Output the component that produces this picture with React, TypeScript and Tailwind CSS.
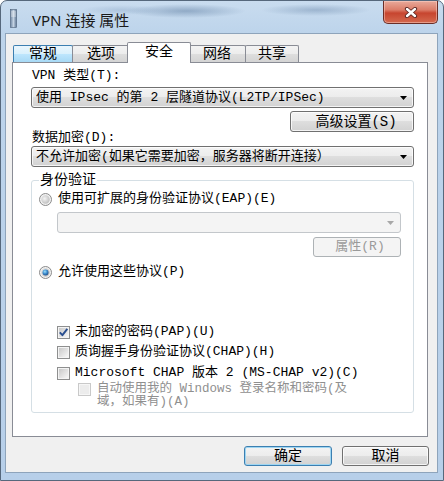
import React from "react";

function Arrow({ disabled }: { disabled?: boolean }) {
  return (
    <svg width="7" height="4" viewBox="0 0 7 4" className="shrink-0">
      <path d="M0 0H7L3.5 4Z" fill={disabled ? "#a8a8a8" : "#000"} />
    </svg>
  );
}

function Combo({ text, disabled, className }: { text?: string; disabled?: boolean; className?: string }) {
  return (
    <div
      className={`flex h-[21px] items-center rounded-[3px] border pl-[4px] pr-[6px] ${
        disabled
          ? "border-[#c3c7cb] bg-[#f4f4f4]"
          : "border-[#707070] bg-[linear-gradient(#f3f3f3,#ececec_50%,#dedede_50%,#d2d2d2)] shadow-[inset_0_0_0_1px_rgba(255,255,255,0.75)]"
      } ${className ?? ""}`}
    >
      <span className="flex-1 truncate whitespace-pre text-[13px] leading-[15px]">{text}</span>
      <Arrow disabled={disabled} />
    </div>
  );
}

function Radio({ checked }: { checked?: boolean }) {
  return (
    <svg width="13" height="13" viewBox="0 0 13 13" className="shrink-0">
      <defs>
        <radialGradient id="rg-off" cx="40%" cy="40%" r="70%">
          <stop offset="0" stopColor="#f4f4f4" />
          <stop offset="1" stopColor="#b9b9b9" />
        </radialGradient>
        <radialGradient id="rg-on" cx="40%" cy="35%" r="70%">
          <stop offset="0" stopColor="#9fe0fb" />
          <stop offset="0.5" stopColor="#3f8fd0" />
          <stop offset="1" stopColor="#1c4a85" />
        </radialGradient>
      </defs>
      <circle cx="6.5" cy="6.5" r="6" fill="#f2f2f2" stroke="#8a8a8a" />
      <circle cx="6.5" cy="6.5" r="4.2" fill="url(#rg-off)" />
      {checked && <circle cx="6.5" cy="6.5" r="3" fill="url(#rg-on)" />}
    </svg>
  );
}

function Check({ checked, disabled }: { checked?: boolean; disabled?: boolean }) {
  return (
    <svg width="13" height="13" viewBox="0 0 13 13" className="shrink-0">
      <defs>
        <linearGradient id="cb-in" x1="0" y1="0" x2="1" y2="1">
          <stop offset="0" stopColor="#c9c9c9" />
          <stop offset="1" stopColor="#f7f7f7" />
        </linearGradient>
      </defs>
      <rect x="0.5" y="0.5" width="12" height="12" fill={disabled ? "#f6f6f6" : "#f4f4f4"} stroke={disabled ? "#c9c9c9" : "#8e8f8f"} />
      {!disabled && <rect x="2" y="2" width="9" height="9" fill="url(#cb-in)" />}
      {disabled && <rect x="2" y="2" width="9" height="9" fill="#ececec" />}
      {checked && (
        <path d="M2.8 6.4L5.4 9.2L10.3 2.8" fill="none" stroke="#2a4f90" strokeWidth="1.9" strokeLinejoin="round" />
      )}
    </svg>
  );
}

export default function App() {
  return (
    <div className="h-[481px] w-[444px] font-[family-name:'Liberation_Mono','Noto_Sans_CJK_SC',monospace] text-black">
      <div className="flex h-[481px] w-[444px] flex-col rounded-t-[7px] border border-[#56687c] bg-[linear-gradient(to_bottom,#c9dcef,#bdd4eb_32px,#b7cfe9)]">
        {/* title bar */}
        <div className="flex h-[32px] items-start bg-[radial-gradient(60px_7px_at_185px_10px,rgba(80,112,150,0.45),transparent),radial-gradient(55px_6px_at_315px_9px,rgba(80,112,150,0.35),transparent),radial-gradient(40px_5px_at_120px_9px,rgba(120,150,185,0.3),transparent)]">
          <svg width="7" height="19" viewBox="0 0 7 19" className="ml-[9px] mt-[8px] shrink-0">
            <defs>
              <linearGradient id="ti" x1="0" y1="0" x2="1" y2="0">
                <stop offset="0" stopColor="#6f87a3" />
                <stop offset="0.5" stopColor="#c3d2e2" />
                <stop offset="1" stopColor="#5d7592" />
              </linearGradient>
            </defs>
            <rect x="0.5" y="0.5" width="6" height="18" fill="url(#ti)" stroke="#4c6078" strokeWidth="0.6" />
            <path d="M1 3H6M1 5H6M1 7H6" stroke="#ffffff" strokeOpacity="0.8" strokeWidth="0.8" />
          </svg>
          <div className="ml-[15px] mt-[9px] font-[family-name:'Noto_Sans','Noto_Sans_CJK_SC',sans-serif] text-[15px] leading-[20px] text-[#1a1a1a]">
            VPN 连接 属性
          </div>
          <div className="ml-auto mr-[5px] flex h-[23px] w-[55px] items-center justify-center rounded-b-[5px] border border-t-0 border-[#6a2e27] bg-[linear-gradient(#e9aa9b,#dc7d69_40%,#c7452f_55%,#d46a4f)] shadow-[inset_0_0_0_1px_rgba(255,220,210,0.45)]">
            <svg width="14" height="11" viewBox="0 0 14 11">
              <path d="M3 2L11 9M11 2L3 9" stroke="#5a2520" strokeWidth="4.2" strokeLinecap="round" />
              <path d="M3 2L11 9M11 2L3 9" stroke="#ffffff" strokeWidth="2.4" strokeLinecap="round" />
            </svg>
          </div>
        </div>

        {/* client area */}
        <div className="ml-[4px] flex h-[440px] w-[433px] flex-col border border-[#8ea4bb] bg-[#f0f0f0]">
          {/* tabs */}
          <div className="flex h-[28px] items-end pl-[7px] text-[14px]">
            <div className="flex h-[17px] w-[60px] items-center justify-center rounded-t-[2px] border border-b-0 border-[#3c7fb1] bg-[linear-gradient(#eaf6fd,#d9f0fc_50%,#bee6fd_50%,#a7d9f5)] leading-[16px]">
              常规
            </div>
            <div className="-ml-px flex h-[17px] w-[58px] items-center justify-center rounded-t-[2px] border border-b-0 border-[#898c95] bg-[linear-gradient(#f3f3f3,#ececec_50%,#dedede_50%,#d4d4d4)] leading-[16px]">
              选项
            </div>
            <div className="relative z-10 -mb-px -ml-[3px] -mr-[3px] flex h-[21px] w-[64px] items-start justify-center rounded-t-[2px] border border-b-0 border-[#898c95] bg-white pt-[1px] leading-[16px]">
              安全
            </div>
            <div className="flex h-[17px] w-[58px] items-center justify-center rounded-t-[2px] border border-b-0 border-[#898c95] bg-[linear-gradient(#f3f3f3,#ececec_50%,#dedede_50%,#d4d4d4)] leading-[16px]">
              网络
            </div>
            <div className="-ml-px flex h-[17px] w-[54px] items-center justify-center rounded-t-[2px] border border-b-0 border-[#898c95] bg-[linear-gradient(#f3f3f3,#ececec_50%,#dedede_50%,#d4d4d4)] leading-[16px]">
              共享
            </div>
          </div>

          {/* panel */}
          <div className="ml-[6px] flex h-[375px] w-[416px] flex-col border border-[#898c95] bg-white pl-[18px] pr-[13px] pt-[5px] text-[13px]">
            <div className="h-[16px] pl-[1px] leading-[16px]">VPN 类型(T):</div>
            <Combo className="mt-[3px]" text="使用 IPsec 的第 2 层隧道协议(L2TP/IPSec)" />
            <div className="mt-[3px] flex h-[21px] w-[124px] items-center justify-center self-end rounded-[3px] border border-[#707070] bg-[linear-gradient(#f3f3f3,#ececec_50%,#dedede_50%,#d2d2d2)] pl-[8px] text-[14px] leading-[16px] shadow-[inset_0_0_0_1px_rgba(255,255,255,0.75)]">
              高级设置(S)
            </div>
            <div className="-mt-px h-[13px] pl-[1px] leading-[13px]">数据加密(D):</div>
            <Combo className="mt-[2px]" text="不允许加密(如果它需要加密，服务器将断开连接）" />

            <fieldset className="mt-[5px] rounded-[3px] border border-[#d5dfe5] pb-[3px] pl-[7px]">
              <legend className="px-[1px] text-[14px] leading-[16px]">身份验证</legend>
              <div className="mt-[3px] flex h-[16px] items-center gap-[6px]">
                <Radio />
                <span className="leading-[16px]">使用可扩展的身份验证协议(EAP)(E)</span>
              </div>
              <div className="ml-[18px] mt-[5px] flex w-[344px] flex-col">
                <Combo disabled />
                <div className="mt-[4px] flex h-[20px] w-[88px] items-center justify-center self-end rounded-[3px] border border-[#adb2b5] bg-[#f4f4f4] pl-[6px] text-[13px] leading-[16px] text-[#9a9a9a]">
                  属性(R)
                </div>
              </div>
              <div className="mt-[7px] flex h-[16px] items-center gap-[6px]">
                <Radio checked />
                <span className="leading-[16px]">允许使用这些协议(P)</span>
              </div>

              <div className="ml-[18px] mt-[44px] flex h-[16px] items-center gap-[5px]">
                <Check checked />
                <span className="leading-[16px]">未加密的密码(PAP)(U)</span>
              </div>
              <div className="ml-[18px] mt-[4px] flex h-[16px] items-center gap-[5px]">
                <Check />
                <span className="leading-[16px]">质询握手身份验证协议(CHAP)(H)</span>
              </div>
              <div className="ml-[18px] mt-[5px] flex h-[16px] items-center gap-[5px]">
                <Check />
                <span className="leading-[16px]">Microsoft CHAP 版本 2 (MS-CHAP v2)(C)</span>
              </div>
              <div className="ml-[39px] mt-[2px] flex items-start gap-[6px]">
                <Check disabled />
                <span className="text-[12.5px] leading-[13px] text-[#8f8f8f]">
                  自动使用我的 Windows 登录名称和密码(及
                  <br />
                  域，如果有)(A)
                </span>
              </div>
            </fieldset>
          </div>

          {/* bottom buttons */}
          <div className="mt-[9px] flex justify-end gap-[10px] pr-[8px] text-[14px]">
            <div className="flex h-[20px] w-[88px] items-center justify-center rounded-[3px] border border-[#3c7fb1] bg-[linear-gradient(#f3f3f3,#ececec_50%,#dedede_50%,#d2d2d2)] leading-[16px] shadow-[inset_0_0_0_1px_#9fd6f2]">
              确定
            </div>
            <div className="flex h-[20px] w-[87px] items-center justify-center rounded-[3px] border border-[#707070] bg-[linear-gradient(#f3f3f3,#ececec_50%,#dedede_50%,#d2d2d2)] leading-[16px] shadow-[inset_0_0_0_1px_rgba(255,255,255,0.75)]">
              取消
            </div>
          </div>
        </div>
      </div>
    </div>
  );
}
